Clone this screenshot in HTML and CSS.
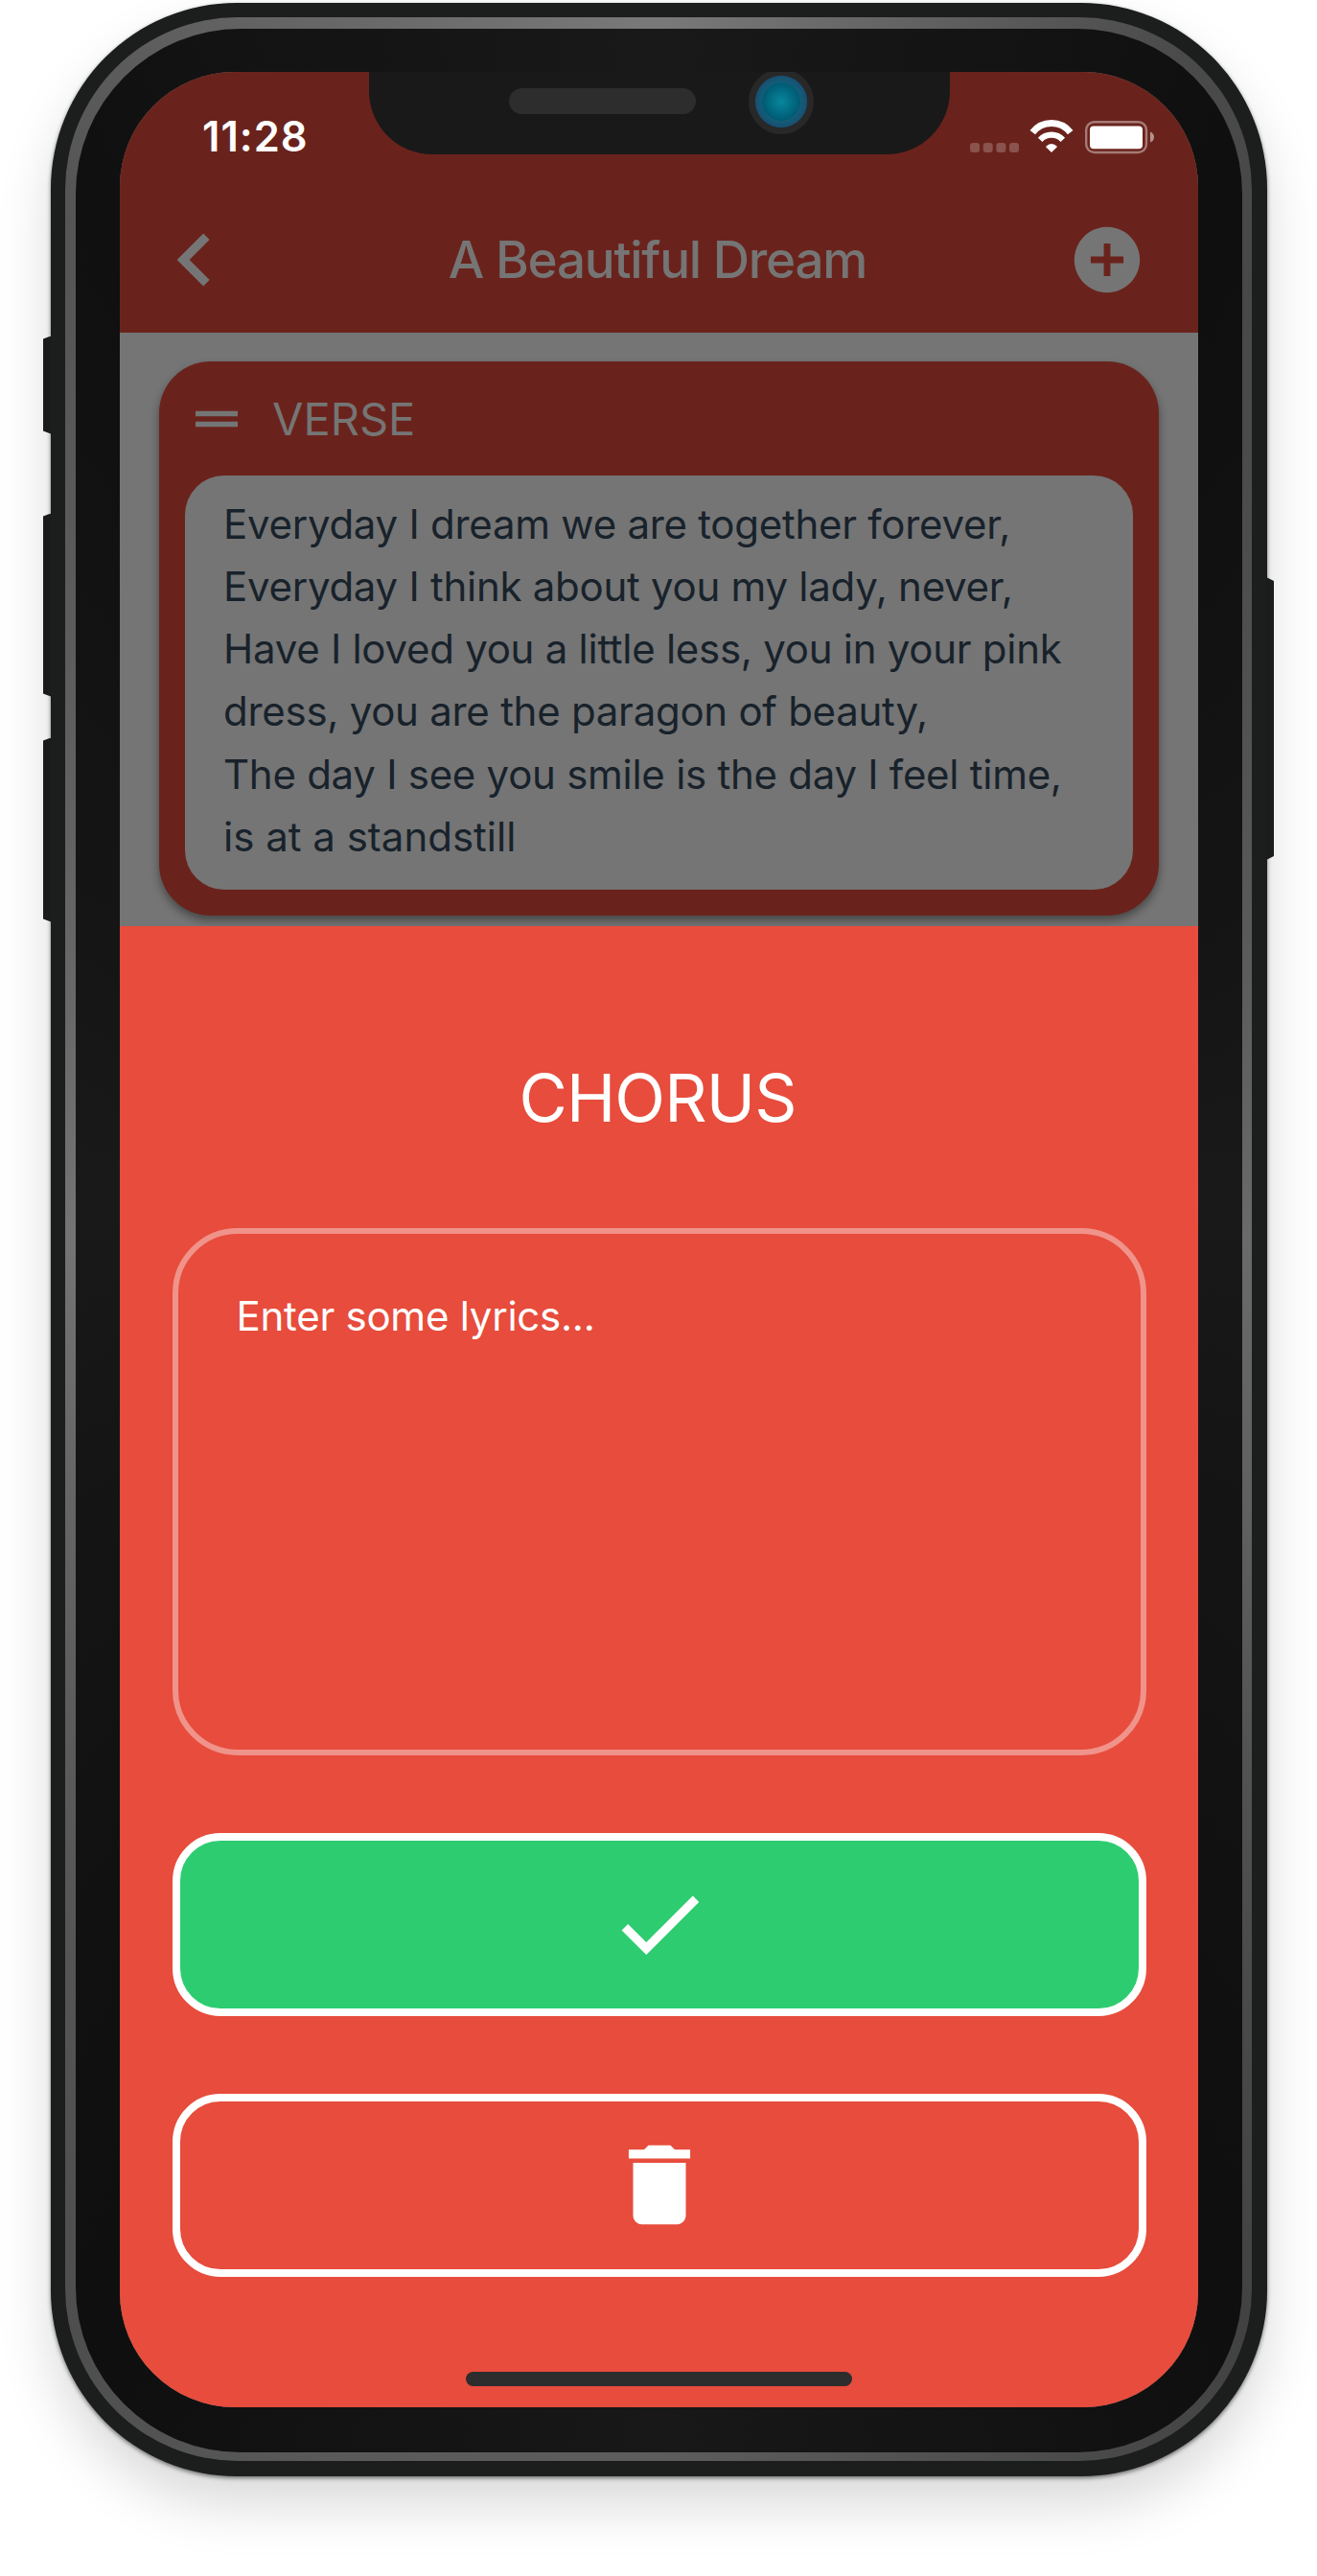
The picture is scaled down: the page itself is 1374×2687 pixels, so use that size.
FILE: index.html
```html
<!DOCTYPE html>
<html lang="en">
<head>
<meta charset="utf-8">
<title>A Beautiful Dream</title>
<link rel="stylesheet" href="styles.css">
</head>
<body>
<div class="phone">
  <i class="key key-mute"></i>
  <i class="key key-up"></i>
  <i class="key key-down"></i>
  <i class="key key-power"></i>
  <div class="ring">
    <div class="bezel">
      <main class="screen">
        <div class="notch">
          <span class="speaker"></span>
          <span class="camera"></span>
        </div>
        <header class="top">
          <div class="status">
            <span class="time">11:28</span>
            <svg class="status-icons" width="194" height="36" viewBox="0 0 194 36">
              <g fill="#fff" fill-opacity=".22">
                <rect x="2" y="24" width="10" height="10" rx="3"/>
                <rect x="15.7" y="24" width="10" height="10" rx="3"/>
                <rect x="29.4" y="24" width="10" height="10" rx="3"/>
                <rect x="43" y="24" width="10" height="10" rx="3"/>
              </g>
              <g fill="none" stroke="#fff">
                <path d="M67.3 13.2a25 25 0 0 1 39.4 0" stroke-width="7"/>
                <path d="M75.2 20.9a16 16 0 0 1 23.6 0" stroke-width="6.2"/>
              </g>
              <path d="M87 34l-6.100-6.100q6.100-6 12.200 0z" fill="#fff"/>
              <rect x="123.200" y="2.200" width="62.800" height="31.800" rx="8.500" fill="none" stroke="#fff" stroke-opacity=".4" stroke-width="2.400"/>
              <rect x="127" y="6.500" width="55" height="23.700" rx="4" fill="#fff"/>
              <path d="M190 12.500q4 1.500 4 5.500t-4 5.500z" fill="#fff" fill-opacity=".5"/>
            </svg>
          </div>
          <nav class="bar">
            <svg class="back" viewBox="0 0 24 24"><path d="M15.410 7.410 14 6l-6 6 6 6 1.410-1.410L10.830 12z"/></svg>
            <h1 class="title">A Beautiful Dream</h1>
            <svg class="add" viewBox="0 0 24 24"><path d="M12 2C6.480 2 2 6.480 2 12s4.480 10 10 10 10-4.480 10-10S17.520 2 12 2zm5 11h-4v4h-2v-4H7v-2h4V7h2v4h4v2z"/></svg>
          </nav>
        </header>
        <section class="page">
          <article class="card">
            <div class="card-head">
              <svg class="handle" viewBox="0 0 24 24"><path d="M20 9H4v2h16V9zM4 15h16v-2H4v2z"/></svg>
              <h2 class="card-title">VERSE</h2>
            </div>
            <p class="lyrics">Everyday I dream we are together forever,<br>Everyday I think about you my lady, never,<br>Have I loved you a little less, you in your pink<br>dress, you are the paragon of beauty,<br>The day I see you smile is the day I feel time,<br><span class="lyrics-end">is at a standstill</span></p>
          </article>
        </section>
        <section class="sheet">
          <h2 class="sheet-title">CHORUS</h2>
          <div class="field">Enter some lyrics...</div>
          <button class="btn btn-ok" aria-label="Save"><svg viewBox="0 0 24 24"><path d="M9 16.170L4.830 12l-1.420 1.410L9 19 21 7l-1.410-1.410z"/></svg></button>
          <button class="btn" aria-label="Delete"><svg viewBox="0 0 24 24"><path d="M6 19c0 1.100.9 2 2 2h8c1.100 0 2-.9 2-2V7H6v12zM19 4h-3.500l-1-1h-5l-1 1H5v2h14V4z"/></svg></button>
          <span class="home"></span>
        </section>
      </main>
    </div>
  </div>
</div>
</body>
</html>
```
FILE: styles.css
```css
* { box-sizing: border-box; }

body {
  margin: 0;
  width: 1374px;
  height: 2687px;
  padding: 2.5px 0 0 52.5px;
  overflow: hidden;
  background: #fff;
  font-family: Inter, "Liberation Sans", sans-serif;
  font-feature-settings: "calt" 0, "liga" 0;
}

h1, h2, p { margin: 0; font-weight: 400; }

/* ---- device ---- */
.phone {
  position: relative;
  width: 1269px;
  height: 2580px;
  padding: 15.5px;
  border-radius: 194px;
  background: #1b1e1d;
  box-shadow: 0 2px 4px rgba(0, 0, 0, .5), 0 30px 56px rgba(0, 0, 0, .15);
}

.ring {
  height: 2549px;
  padding: 12px 10px 9px 11px;
  border-radius: 180px;
  background: conic-gradient(#797979 0deg, #4a4a4a 24deg, #484848 32deg, #6a6a6a 90deg, #606060 115deg, #424242 152deg, #5d5d5d 180deg, #5a5a5a 195deg, #4e4e4e 208deg, #747474 270deg, #555 330deg, #797979 360deg);
}

.bezel {
  height: 2528px;
  padding: 45px 46px 47px;
  border-radius: 172px;
  background: conic-gradient(#191919 0deg, #0f0f0f 28deg, #191919 85deg, #0f0f0f 152deg, #181818 180deg, #0f0f0f 206deg, #191919 275deg, #101010 332deg, #191919 360deg);
}

.key {
  position: absolute;
  left: -7.5px;
  width: 8px;
  background: #1a1c1b;
  clip-path: polygon(0 3px, 100% 0, 100% 100%, 0 calc(100% - 3px));
}
.key-mute { top: 348px; height: 102px; }
.key-up { top: 533px; height: 191px; }
.key-down { top: 767px; height: 192px; }
.key-power {
  left: auto;
  right: -7.5px;
  top: 599.500px;
  height: 295px;
  clip-path: polygon(0 0, 100% 4px, 100% calc(100% - 4px), 0 100%);
}

.screen {
  position: relative;
  display: flex;
  flex-direction: column;
  width: 1125px;
  height: 2436px;
  overflow: hidden;
  border-radius: 120px;
  background: #757575;
}

.notch {
  position: absolute;
  top: 0;
  left: 260px;
  width: 606px;
  height: 86px;
  border-radius: 0 0 66px 66px;
  background: #191919;
}
.speaker {
  position: absolute;
  left: 146px;
  top: 17px;
  width: 195px;
  height: 27px;
  border-radius: 14px;
  background: #2d2d2d;
}
.camera {
  position: absolute;
  left: 396px;
  top: -3px;
  width: 68px;
  height: 68px;
  border-radius: 50%;
  background: radial-gradient(circle closest-side, #07879d 0, #005a74 19.500px, #135d76 20px, #175073 26.500px, #282828 27.500px);
}

/* ---- page behind the sheet ---- */
.top {
  display: flex;
  flex-direction: column;
  height: 272px;
  background: #6a231c;
  color: #757575;
}
.status {
  display: flex;
  justify-content: space-between;
  align-items: center;
  height: 135px;
  padding: 0 46px 0 86px;
  color: #fff;
}
.time { padding-bottom: 2px; font-size: 43.500px; font-weight: 600; letter-spacing: 1px; }
.bar {
  display: flex;
  justify-content: space-between;
  align-items: center;
  height: 121px;
  padding: 0 54px 0 23px;
  fill: #757575;
}
.back { width: 110px; height: 110px; }
.title { font-size: 53px; font-weight: 500; letter-spacing: -1.250px; white-space: nowrap; }
.add { width: 82px; height: 82px; }

.page { height: 619px; padding: 30px 41px 0; }
.card {
  height: 578px;
  padding: 0 27px;
  border-radius: 54px;
  background: #6a231c;
  box-shadow: 0 5px 10px rgba(0, 0, 0, .4);
}
.card-head {
  display: flex;
  align-items: center;
  gap: 25px;
  height: 119px;
  color: #757575;
  fill: #757575;
}
.handle { width: 66px; height: 66px; }
.card-title { font-size: 47px; }
.lyrics {
  height: 432px;
  padding: 18px 0 0 40px;
  border-radius: 41px;
  background: #757575;
  color: #18222b;
  font-size: 42px;
  line-height: 65.130px;
  letter-spacing: -.27px;
  white-space: nowrap;
}
.lyrics-end { letter-spacing: 0; }

/* ---- sheet ---- */
.sheet {
  flex: none;
  display: flex;
  flex-direction: column;
  align-items: center;
  height: 1545px;
  padding: 136px 55px 0;
  background: #e74c3c;
  color: #fff;
}
.sheet-title {
  height: 179px;
  padding-right: 3px;
  font-size: 69px;
  line-height: 86px;
  letter-spacing: -.9px;
}
.field {
  width: 1016px;
  height: 550px;
  padding: 60px 61px;
  border: 6px solid rgba(255, 255, 255, .4);
  border-radius: 68px;
  font-size: 42px;
  line-height: 52px;
  letter-spacing: -.25px;
}
.btn {
  display: flex;
  align-items: center;
  justify-content: center;
  flex: none;
  width: 1016px;
  height: 191px;
  margin: 81px 0 0;
  padding: 0;
  border: 8px solid #fff;
  border-radius: 50px;
  background: none;
}
.btn-ok { background: #2ecc71; }
.btn svg { width: 110px; height: 110px; margin-top: -1px; fill: #fff; }
.home {
  width: 403px;
  height: 15px;
  margin-top: 99px;
  border-radius: 8px;
  background: #2d2d2d;
}
```
